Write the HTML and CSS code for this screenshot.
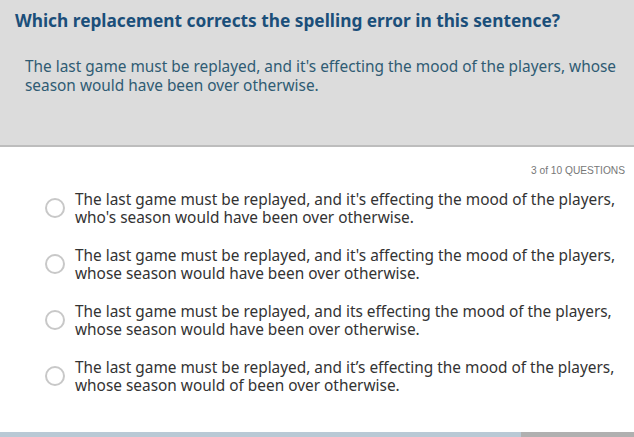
FILE: index.html
```html
<!DOCTYPE html>
<html>
<head>
<meta charset="utf-8">
<link rel="stylesheet" href="styles.css">
</head>
<body>
<div class="header">
  <h1 class="title">Which replacement corrects the spelling error in this sentence?</h1>
  <p class="prompt">The last game must be replayed, and it's effecting the mood of the players, whose season would have been over otherwise.</p>
</div>
<div class="body">
  <div class="count">3 of 10 QUESTIONS</div>
  <div class="options">
    <div class="option"><span class="radio"></span><span class="text">The last game must be replayed, and it's effecting the mood of the players, who's season would have been over otherwise.</span></div>
    <div class="option"><span class="radio"></span><span class="text">The last game must be replayed, and it's affecting the mood of the players, whose season would have been over otherwise.</span></div>
    <div class="option"><span class="radio"></span><span class="text">The last game must be replayed, and its effecting the mood of the players, whose season would have been over otherwise.</span></div>
    <div class="option"><span class="radio"></span><span class="text">The last game must be replayed, and it’s effecting the mood of the players, whose season would of been over otherwise.</span></div>
  </div>
</div>
<div class="footer"><div class="progress"></div></div>
</body>
</html>
```
FILE: styles.css
```css
html, body { margin: 0; padding: 0; }
body {
  width: 634px;
  height: 437px;
  background: #fff;
  font-family: "Noto Sans", sans-serif;
  display: flex;
  flex-direction: column;
  overflow: hidden;
}
.header {
  background: #dcdcdc;
  height: 147px;
  border-bottom: 2px solid #bdbdbd;
  padding: 11px 8px 0 15px;
  box-sizing: border-box;
  flex: none;
}
.title {
  margin: 0;
  font-size: 17.3px;
  font-weight: 700;
  color: #1b4f7a;
  line-height: 20px;
}
.prompt {
  margin: 26px 0 0 10px;
  font-size: 15.4px;
  color: #2f5b73;
  line-height: 19px;
}
.body {
  flex: 1;
  padding: 18px 9px 0 45px;
}
.count {
  text-align: right;
  font-family: "Liberation Sans", sans-serif;
  font-size: 10.2px;
  color: #777;
  line-height: 12px;
}
.options {
  margin-top: 14px;
  display: flex;
  flex-direction: column;
  gap: 20px;
}
.option {
  display: flex;
  align-items: flex-start;
  gap: 10px;
}
.radio {
  flex: none;
  width: 16px;
  height: 16px;
  border: 2px solid #c8c8c8;
  border-radius: 50%;
  margin-top: 7px;
}
.text {
  font-size: 15.4px;
  color: #333;
  line-height: 18px;
}
.footer {
  flex: none;
  height: 5px;
  background: #b0b0b0;
}
.progress {
  width: 521px;
  height: 100%;
  background: #b9c9d5;
}
```
